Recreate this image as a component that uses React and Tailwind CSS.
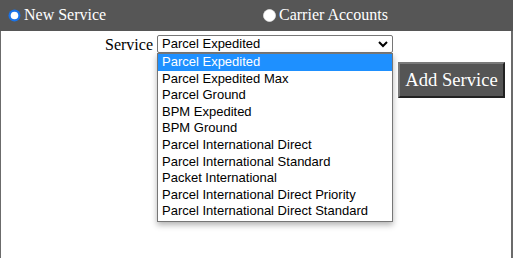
import React from 'react';

const services = [
    'Parcel Expedited',
    'Parcel Expedited Max',
    'Parcel Ground',
    'BPM Expedited',
    'BPM Ground',
    'Parcel International Direct',
    'Parcel International Standard',
    'Packet International',
    'Parcel International Direct Priority',
    'Parcel International Direct Standard',
];

const Radio = ({ checked }) => (
    <svg width="13" height="13" viewBox="0 0 13 13" className="shrink-0">
        {checked ? (
            <>
                <circle cx="6.5" cy="6.5" r="6" fill="#1a73e8" />
                <circle cx="6.5" cy="6.5" r="3.8" fill="#fff" />
            </>
        ) : (
            <circle cx="6.5" cy="6.5" r="6" fill="#fff" stroke="#e6e6e6" strokeWidth="0.8" />
        )}
    </svg>
);

const App = () => {
    const serif = { fontFamily: '"Liberation Serif", "Times New Roman", serif' };
    const sans = { fontFamily: '"Liberation Sans", Arial, sans-serif' };

    return (
        <div className="w-[513px] h-[258px] overflow-hidden bg-white relative" style={serif}>
            {/* Tabs bar */}
            <div className="h-[31px] bg-[#565656] flex text-white text-[16px]">
                <label className="w-[255px] flex items-center gap-[3px] pl-[8px] pb-[1px]">
                    <Radio checked />
                    <span>New Service</span>
                </label>
                <label className="flex items-center gap-[3px] pl-[8px] pb-[1px]">
                    <Radio />
                    <span>Carrier Accounts</span>
                </label>
            </div>

            {/* Form */}
            <div className="h-[227px] border-l border-r-2 border-[#6b6b6b] flex items-start pt-[4px]">
                <div className="w-[152px] text-right text-[16px] text-black leading-[18px] pt-[1px]">Service</div>
                <div className="ml-[4px] w-[236px] h-[18px] border border-[#767676] rounded-[2px] bg-white flex items-center justify-between pl-[4px] pr-[4px] text-[13px] text-black" style={sans}>
                    <span>Parcel Expedited</span>
                    <svg width="10" height="7" viewBox="0 0 10 7">
                        <polyline points="1,1 5,5 9,1" fill="none" stroke="#000" strokeWidth="2" />
                    </svg>
                </div>
                <button className="ml-[5px] mt-[27px] w-[107px] h-[36px] bg-[#555] text-white text-[18.6px] border-2 border-t-[#7a7a7a] border-l-[#7a7a7a] border-b-[#222] border-r-[#222] flex items-center justify-center" style={serif}>
                    Add Service
                </button>
            </div>

            {/* Open select list */}
            <div className="absolute left-[157px] top-[53px] w-[236px] bg-white border border-[#767676] shadow-[0_3px_6px_rgba(0,0,0,0.3)] pb-[1px]" style={sans}>
                {services.map((s, i) => (
                    <div
                        key={s}
                        className={`h-[16.6px] leading-[16.6px] pl-[4px] text-[13px] whitespace-nowrap ${i === 0 ? 'bg-[#1e90ff] text-white' : 'text-black'}`}
                    >
                        {s}
                    </div>
                ))}
            </div>
        </div>
    );
};

export default App;
